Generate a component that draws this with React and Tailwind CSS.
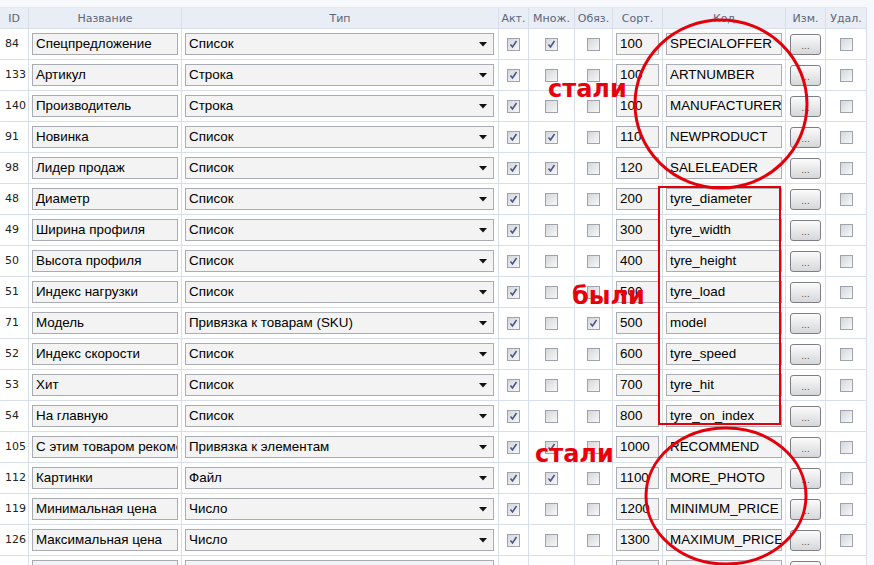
import React from 'react';

const rows = [
  { id: 84, name: 'Спецпредложение', type: 'Список', act: true, mult: true, req: false, sort: '100', code: 'SPECIALOFFER' },
  { id: 133, name: 'Артикул', type: 'Строка', act: true, mult: false, req: false, sort: '100', code: 'ARTNUMBER' },
  { id: 140, name: 'Производитель', type: 'Строка', act: true, mult: false, req: false, sort: '100', code: 'MANUFACTURER' },
  { id: 91, name: 'Новинка', type: 'Список', act: true, mult: true, req: false, sort: '110', code: 'NEWPRODUCT' },
  { id: 98, name: 'Лидер продаж', type: 'Список', act: true, mult: true, req: false, sort: '120', code: 'SALELEADER' },
  { id: 48, name: 'Диаметр', type: 'Список', act: true, mult: false, req: false, sort: '200', code: 'tyre_diameter' },
  { id: 49, name: 'Ширина профиля', type: 'Список', act: true, mult: false, req: false, sort: '300', code: 'tyre_width' },
  { id: 50, name: 'Высота профиля', type: 'Список', act: true, mult: false, req: false, sort: '400', code: 'tyre_height' },
  { id: 51, name: 'Индекс нагрузки', type: 'Список', act: true, mult: false, req: false, sort: '500', code: 'tyre_load' },
  { id: 71, name: 'Модель', type: 'Привязка к товарам (SKU)', act: true, mult: false, req: true, sort: '500', code: 'model' },
  { id: 52, name: 'Индекс скорости', type: 'Список', act: true, mult: false, req: false, sort: '600', code: 'tyre_speed' },
  { id: 53, name: 'Хит', type: 'Список', act: true, mult: false, req: false, sort: '700', code: 'tyre_hit' },
  { id: 54, name: 'На главную', type: 'Список', act: true, mult: false, req: false, sort: '800', code: 'tyre_on_index' },
  { id: 105, name: 'С этим товаром рекомендуем', type: 'Привязка к элементам', act: true, mult: true, req: false, sort: '1000', code: 'RECOMMEND' },
  { id: 112, name: 'Картинки', type: 'Файл', act: true, mult: true, req: false, sort: '1100', code: 'MORE_PHOTO' },
  { id: 119, name: 'Минимальная цена', type: 'Число', act: true, mult: false, req: false, sort: '1200', code: 'MINIMUM_PRICE' },
  { id: 126, name: 'Максимальная цена', type: 'Число', act: true, mult: false, req: false, sort: '1300', code: 'MAXIMUM_PRICE' },
  { id: '', name: '', type: '', act: false, mult: false, req: false, sort: '', code: '' },
];

const cols = 'grid grid-cols-[29px_153px_317px_30px_46px_38px_50px_123px_40px_41px]';
const cell = 'border-r border-b border-[#d9dfea] flex items-center';

const Check = ({ checked }) => (
  <span className="w-[13px] h-[13px] border border-[#9ea3ab] bg-gradient-to-br from-[#d4d6da] to-[#f8f8f8] flex items-center justify-center">
    {checked && (
      <svg width="9" height="9" viewBox="0 0 9 9">
        <path d="M1.5 4.5 L3.5 7 L7.5 1" fill="none" stroke="#4a5688" strokeWidth="1.6" />
      </svg>
    )}
  </span>
);

const Field = ({ value, className = '' }) => (
  <div className={`h-[22px] border border-[#a9adb3] bg-[#f3f3f3] px-[3px] flex items-center overflow-hidden whitespace-nowrap text-[13.4px] text-black font-['Liberation_Sans',Arial,sans-serif] ${className}`}>
    {value}
  </div>
);

const Header = ({ children, className = '' }) => (
  <div className={`${cell} justify-center pt-[2px] text-[11px] text-[#5d6677] ${className}`}>{children}</div>
);

export default function App() {
  return (
    <div className="relative w-[874px] h-[565px] overflow-hidden bg-[#f7f8fb] font-['DejaVu_Sans',Verdana,sans-serif]">
      <div className="pt-[7px] w-[867px]">
        <div className={`${cols} h-[22px] bg-[#e9edf5] border-t border-[#e3e7ef]`}>
          <Header>ID</Header>
          <Header>Название</Header>
          <Header>Тип</Header>
          <Header>Акт.</Header>
          <Header>Множ.</Header>
          <Header>Обяз.</Header>
          <Header>Сорт.</Header>
          <Header>Код</Header>
          <Header>Изм.</Header>
          <Header>Удал.</Header>
        </div>
        {rows.map((r, i) => (
          <div key={i} className={`${cols} h-[31px] bg-white`}>
            <div className={`${cell} pl-[5px] text-[11px] text-[#222]`}>{r.id}</div>
            <div className={`${cell} px-[3px]`}><Field value={r.name} className="w-[146px]" /></div>
            <div className={`${cell} px-[3px]`}>
              <div className="w-[309px] h-[22px] border border-[#a9adb3] bg-[#f3f3f3] pl-[3px] pr-[6px] flex items-center justify-between text-[13.4px] text-black font-['Liberation_Sans',Arial,sans-serif]">
                <span>{r.type}</span>
                <svg width="8" height="5" viewBox="0 0 8 5"><path d="M0 0 H8 L4 4.5 Z" fill="#111" /></svg>
              </div>
            </div>
            <div className={`${cell} justify-center`}><Check checked={r.act} /></div>
            <div className={`${cell} justify-center`}><Check checked={r.mult} /></div>
            <div className={`${cell} justify-center`}><Check checked={r.req} /></div>
            <div className={`${cell} px-[3px]`}><Field value={r.sort} className="w-[43px]" /></div>
            <div className={`${cell} px-[3px]`}><Field value={r.code} className="w-[116px]" /></div>
            <div className={`${cell} justify-center`}>
              <div className="w-[31px] h-[21px] rounded-[3px] border border-[#7d7f84] bg-gradient-to-b from-[#fbfbfb] to-[#d6d7d9] flex items-end justify-center pb-[3px] text-[9px] leading-none text-[#555]">...</div>
            </div>
            <div className={`${cell} justify-center`}><Check checked={false} /></div>
          </div>
        ))}
      </div>

      <svg className="absolute left-0 top-0 pointer-events-none" width="874" height="565">
        <ellipse cx="721" cy="104" rx="86" ry="84" fill="none" stroke="#e3000b" strokeWidth="3" />
        <rect x="659" y="187" width="121" height="237" fill="none" stroke="#e3000b" strokeWidth="2" />
        <ellipse cx="726" cy="496" rx="80" ry="68" fill="none" stroke="#e3000b" strokeWidth="3" />
      </svg>
      <span className="absolute left-[548px] top-[77px] text-[24px] font-bold leading-none text-[#e8000b]">стали</span>
      <span className="absolute left-[572px] top-[284px] text-[24px] font-bold leading-none text-[#e8000b]">были</span>
      <span className="absolute left-[535px] top-[442px] text-[24px] font-bold leading-none text-[#e8000b]">стали</span>
    </div>
  );
}
